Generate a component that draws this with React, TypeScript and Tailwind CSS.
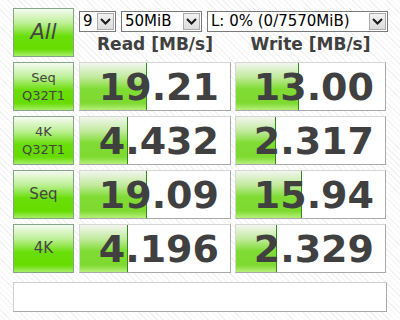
const FONT = "font-['DejaVu_Sans','Verdana',sans-serif]";

const ROWS = [
  { label: ["Seq", "Q32T1"], read: "19.21", readBar: 67, write: "13.00", writeBar: 63 },
  { label: ["4K", "Q32T1"], read: "4.432", readBar: 48, write: "2.317", writeBar: 40 },
  { label: ["Seq"], read: "19.09", readBar: 67, write: "15.94", writeBar: 66 },
  { label: ["4K"], read: "4.196", readBar: 48, write: "2.329", writeBar: 41 },
];

function Chevron() {
  return (
    <svg width="11" height="7" viewBox="0 0 11 7">
      <polyline points="1,1 5.5,5.5 10,1" fill="none" stroke="#1a1a1a" strokeWidth="2" />
    </svg>
  );
}

function Combo({ value, className }: { value: string; className: string }) {
  return (
    <div className={`flex h-[21px] items-stretch border border-[#7a7a7a] bg-white ${className}`}>
      <span className="flex-1 pl-[3px] text-[15px] leading-[19px] text-black">{value}</span>
      <span className="m-[1px] flex w-[17px] items-center justify-center border border-[#acacac] bg-[linear-gradient(to_bottom,#f2f2f2,#dcdcdc)]">
        <Chevron />
      </span>
    </div>
  );
}

function GreenButton({ children }: { children: React.ReactNode }) {
  return (
    <div className="flex h-[49px] w-[61px] shrink-0 flex-col items-center justify-center border border-[#86a486] bg-[linear-gradient(to_bottom,#f6fbf2_0%,#bdf096_30%,#6ade0a_58%,#66dc00_85%,#a6ee68_100%)] text-[#444]">
      {children}
    </div>
  );
}

function Meter({ value, bar, width }: { value: string; bar: number; width: string }) {
  return (
    <div className={`relative flex h-[49px] ${width} items-center justify-end border border-[#d6d6d6] border-r-[#a9a9a9] border-b-[#a9a9a9] bg-white pr-[11px]`}>
      <div
        className="absolute left-0 top-0 h-full border-r border-[#2e8a1c] bg-[linear-gradient(to_bottom,#f2f6ee_0%,#c2ea9e_30%,#80dc34_55%,#7ed930_85%,#b6f07a_100%)]"
        style={{ width: bar }}
      />
      <span className="relative text-[38px] font-bold leading-none text-[#404040]">{value}</span>
    </div>
  );
}

export default function App() {
  return (
    <div
      className={`h-[320px] w-[400px] overflow-hidden bg-[repeating-linear-gradient(45deg,#ffffff_0px,#ffffff_3px,#f2f2f2_3px,#f2f2f2_4px)] pl-[13px] pt-[8px] ${FONT}`}
    >
      {/* top row */}
      <div className="flex gap-[5px]">
        <GreenButton>
          <span className="text-[21px] italic">All</span>
        </GreenButton>
        <div className="flex flex-col">
          <div className="mt-[3px] flex gap-[5px]">
            <Combo value="9" className="w-[37px]" />
            <Combo value="50MiB" className="w-[81px]" />
            <Combo value="L: 0% (0/7570MiB)" className="w-[181px]" />
          </div>
          <div className="flex h-[25px] items-center text-[17px] font-bold text-[#404040]">
            <span className="w-[152px] text-center">Read [MB/s]</span>
            <span className="ml-[4px] w-[151px] text-center">Write [MB/s]</span>
          </div>
        </div>
      </div>

      {/* results */}
      <div className="mt-[5px] flex flex-col gap-[5px]">
        {ROWS.map((r, i) => (
          <div key={i} className="flex">
            <GreenButton>
              {r.label.map((l) => (
                <span key={l} className={r.label.length > 1 ? "text-[13px] leading-[18px]" : "text-[15px]"}>
                  {l}
                </span>
              ))}
            </GreenButton>
            <div className="ml-[5px]">
              <Meter value={r.read} bar={r.readBar} width="w-[152px]" />
            </div>
            <div className="ml-[4px]">
              <Meter value={r.write} bar={r.writeBar} width="w-[151px]" />
            </div>
          </div>
        ))}
      </div>

      {/* comment */}
      <div className="mt-[9px] h-[30px] w-[374px] border border-[#d0d0d0] border-r-[#a9a9a9] border-b-[#a9a9a9] bg-white" />
    </div>
  );
}
